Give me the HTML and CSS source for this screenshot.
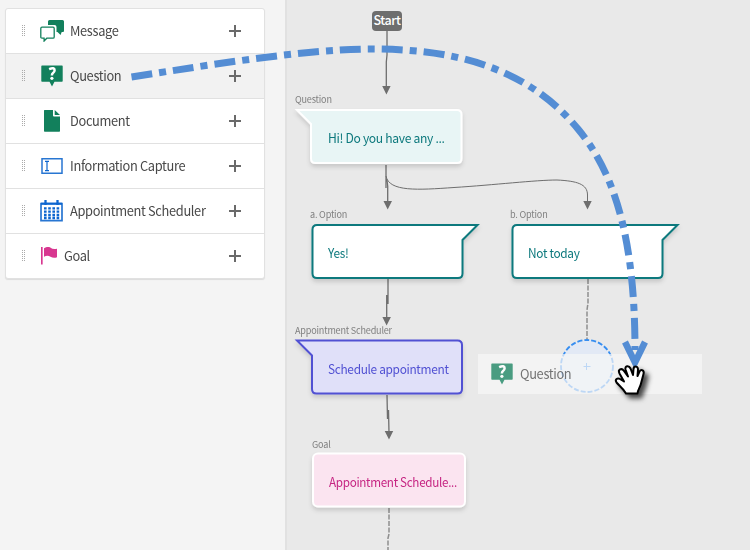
FILE: index.html
```html
<!DOCTYPE html>
<html lang="en">
<head>
<meta charset="utf-8">
<title>Flow designer</title>
<link rel="stylesheet" href="styles.css">
</head>
<body>
<svg class="defs" width="0" height="0" aria-hidden="true">
  <symbol id="grip" viewBox="0 0 5 11">
    <path d="M.5 0V11M2.500 0V11" stroke="#aaa" stroke-width="1" stroke-dasharray="1 1"/>
  </symbol>
  <symbol id="plus" viewBox="0 0 12 12"><path d="M0 6H12M6 0V12" stroke="#6a6a6a" stroke-width="2"/></symbol>
  <symbol id="message" viewBox="0 0 24 22">
    <path d="M9.500 0H22.500Q24 0 24 1.500V11Q24 12 23 12H21.700L20.600 15L17.500 12H16.500V7Q16.500 5 14.500 5H8V1.500Q8 0 9.500 0Z" fill="#12805c"/>
    <path d="M2 7.200H13Q14.200 7.200 14.200 8.400V17Q14.200 18.200 13 18.200H6.800L4.100 21V18.200H2Q.8 18.200 .8 17V8.400Q.8 7.200 2 7.200Z" fill="#fff" stroke="#12805c" stroke-width="1.300"/>
  </symbol>
  <symbol id="question" viewBox="0 0 22 22">
    <path d="M1 .5H21Q21.700 .5 21.700 1.200V16Q21.700 16.700 21 16.700H13.500L11 21.500L8.500 16.700H1Q.3 16.700 .3 16V1.200Q.3 .5 1 .5Z" fill="#12805c"/>
    <path d="M8.100 4.200Q13.600 1.900 13.600 5.300Q13.600 6.900 12 8Q10.900 8.800 10.900 10.400" fill="none" stroke="#fff" stroke-width="2.500"/>
    <circle cx="10.900" cy="13.300" r="1.600" fill="#fff"/>
  </symbol>
</svg>
<div class="app">
  <aside class="palette">
    <ul class="cards">
      <li class="card"><svg class="grip"><use href="#grip"/></svg><svg class="icon message"><use href="#message"/></svg><span>Message</span><svg class="add"><use href="#plus"/></svg></li>
      <li class="card active"><svg class="grip"><use href="#grip"/></svg><svg class="icon"><use href="#question"/></svg><span>Question</span><svg class="add"><use href="#plus"/></svg></li>
      <li class="card"><svg class="grip"><use href="#grip"/></svg><svg class="icon" viewBox="0 0 22 22"><path d="M3.500 0H12V5.500Q12 6.500 13 6.500H19V21Q19 21.700 18.300 21.700H3.700Q3 21.700 3 21V.7Q3 0 3.500 0ZM13.700 0L19 5H13.700Z" fill="#12805c"/></svg><span>Document</span><svg class="add"><use href="#plus"/></svg></li>
      <li class="card"><svg class="grip"><use href="#grip"/></svg><svg class="icon" viewBox="0 0 22 22"><path d="M1 3.700H21V18.300H1Z" fill="#fff" stroke="#2876d2" stroke-width="1.500"/><path d="M4 6.300H8M4 15.700H8M6 6.300V15.700" stroke="#0d66d0" stroke-width="1.200"/></svg><span>Information Capture</span><svg class="add"><use href="#plus"/></svg></li>
      <li class="card"><svg class="grip"><use href="#grip"/></svg><svg class="icon calendar" viewBox="0 0 23 22"><path d="M1 3.700H22V20.700H1Z" fill="#fff" stroke="#2876d2" stroke-width="1.700"/><path d="M1 3.700H22" stroke="#0d66d0" stroke-width="2"/><path d="M5.500 0V5M17.500 0V5" stroke="#0d66d0" stroke-width="2.300"/><path d="M4 8.300H19.500M4 11.700H19.500M4 15H19.500M4 18H19.500" stroke="#0d66d0" stroke-width="2.300" stroke-dasharray="2.600 1.600"/></svg><span>Appointment Scheduler</span><svg class="add"><use href="#plus"/></svg></li>
      <li class="card"><svg class="grip"><use href="#grip"/></svg><svg class="icon goal" viewBox="0 0 16 18"><path d="M.8 0V17.500" stroke="#d83790" stroke-width="1.700"/><path d="M3 1.200Q7-1.300 10 1Q11.500 2.300 16 1.700V10.200Q12.500 11.700 9.500 9.700Q6.500 7.700 3 9.700Z" fill="#d83790"/></svg><span>Goal</span><svg class="add"><use href="#plus"/></svg></li>
    </ul>
  </aside>
  <main class="canvas"></main>
  <div class="stage">
    <svg class="layer" viewBox="0 0 750 550">
      <defs>
        <filter id="shade" x="-10%" y="-10%" width="120%" height="140%"><feDropShadow dx="0" dy="3" stdDeviation="2" flood-opacity=".14"/></filter>
      </defs>
      <g class="wire">
        <path d="M387 31V55L386.300 62V88"/>
        <path d="M386 165V188M386 178Q387.700 181 387.700 186V203"/>
        <path class="branch" d="M386 176C389 192 418 190 454 187.500C494 185 536 180 557 180C577 181 587.500 184 587.500 195V203"/>
        <path d="M388 279V304M386.700 295V318"/>
        <path d="M387 395L387.500 419M388.500 410L389 433"/>
      </g>
      <path class="tip" d="M382.200 86H390.600L386.400 94.500ZM383.500 201H392L387.700 209.500ZM583.300 201H591.700L587.500 209.500ZM382.400 317H390.900L386.600 325.500ZM384.700 431H393.200L389 439.500Z"/>
      <path class="dotted" d="M588 279V303L587 310V341M389 508V534L388 538V550"/>
      <g filter="url(#shade)" stroke-width="2">
        <path d="M297 110H457Q461.500 110 461.500 114.500V158.500Q461.500 163 457 163H315.500Q311 163 311 158.500V124Z" fill="#e8f5f5" stroke="#fff"/>
        <path d="M317 225H477.500L462.500 240V273.500Q462.500 278 458 278H317Q312.500 278 312.500 273.500V229.500Q312.500 225 317 225Z" fill="#fff" stroke="#0d797d"/>
        <path d="M517 225H677.500L662.500 240V273.500Q662.500 278 658 278H517Q512.500 278 512.500 273.500V229.500Q512.500 225 517 225Z" fill="#fff" stroke="#0d797d"/>
        <path d="M297 340.500H457.500Q462 340.500 462 345V389Q462 393.500 457.500 393.500H316.500Q312 393.500 312 389V355.500Z" fill="#e0e0f9" stroke="#5151d3"/>
        <rect x="313" y="453.500" width="152" height="53" rx="5" fill="#fbe4f0" stroke="#fff"/>
      </g>
      <circle cx="587" cy="366" r="26" fill="#e2e9f5" stroke="#378ef0" stroke-width="1.800" stroke-dasharray="5 2"/>
      <path d="M583.500 366.500H590.500M586.500 363V370" stroke="#378ef0"/>
    </svg>
    <span class="start">Start</span>
    <span class="tag q-tag">Question</span>
    <span class="tag a-tag">a. Option</span>
    <span class="tag b-tag">b. Option</span>
    <span class="tag s-tag">Appointment Scheduler</span>
    <span class="tag g-tag">Goal</span>
    <span class="text q-text">Hi! Do you have any ...</span>
    <span class="text a-text">Yes!</span>
    <span class="text b-text">Not today</span>
    <span class="text s-text">Schedule appointment</span>
    <span class="text g-text">Appointment Schedule...</span>
    <div class="ghost"></div>
    <div class="ghost-content"><svg class="icon"><use href="#question"/></svg><span>Question</span></div>
    <svg class="layer" viewBox="0 0 750 550">
      <defs><filter id="handshade" x="-30%" y="-30%" width="180%" height="180%"><feDropShadow dx="4" dy="4" stdDeviation="2.500" flood-opacity=".7"/></filter></defs>
      <path d="M131.500 77C185 69 300 49 372 49C450 49 525 65 578 129C612 170 635 232 635 350" fill="none" stroke="#548dd4" stroke-width="7" stroke-dasharray="21 7 7 7"/>
      <path d="M625 342L635 362.500L645 342" fill="none" stroke="#548dd4" stroke-width="6.500"/>
      <path filter="url(#handshade)" d="M626 393.500C623 388 619.500 386 616.500 382.500C614.500 379.500 617.500 377.500 620 379L624 381.500L619.500 373.500C617.500 369.500 621.500 367.500 624 371L628 376.500L625.500 369.500C624.500 365.500 629 365 630.500 368.500L633 375L633.500 369C634 365.500 638 366 638 369.500L637.500 376L639.500 371.500C641.500 368.500 644.500 370.500 643.500 374L641 383.500C640 388 638 389 637.500 393.500Z" fill="#fff" stroke="#000" stroke-width="2" stroke-linejoin="round"/>
    </svg>
  </div>
</div>
</body>
</html>
```
FILE: styles.css
```css
body { margin: 0; font-family: "Noto Sans CJK SC", "Noto Sans", sans-serif; color: #484848; }
.defs { position: absolute; }
.app { position: relative; display: flex; width: 750px; height: 550px; overflow: hidden; }
.palette { box-sizing: border-box; width: 287px; padding: 8px 20px 0 5px; background: #f4f4f4; border-right: 2px solid #e1e1e1; }
.canvas { flex: 1; background: #e9e9e9; }
.cards { margin: 0; padding: 0; list-style: none; width: 258px; background: #fff; border: 1px solid #e1e1e1; border-radius: 3px; box-shadow: 0 1px 1px #dcdcdc; }
.card { display: flex; align-items: center; box-sizing: border-box; height: 45px; padding: 0 23px 0 16px; border-bottom: 1px solid #e1e1e1; font-size: 13.5px; line-height: 20px; white-space: nowrap; }
.card span, .ghost-content span { letter-spacing: -.36px; transform: scaleX(.95); transform-origin: left; margin-bottom: 2px; }
.card:last-child { border-bottom: 0; height: 44px; }
.active { background: #f2f2f2; }
.grip { width: 5px; height: 11px; margin-right: 14px; margin-bottom: 2px; }
.icon { width: 22px; height: 22px; flex: none; margin-right: 7px; }
.message { width: 24px; margin-left: -1px; margin-right: 6px; }
.calendar { width: 23px; margin-left: -1px; }
.goal { width: 16px; height: 18px; }
.add { width: 12px; height: 12px; margin-left: auto; }
.stage, .layer { position: absolute; inset: 0; width: 750px; height: 550px; }
.wire { fill: none; stroke: #6e6e6e; stroke-width: 1.3; }
.branch { stroke-width: 1; }
.tip { fill: #6e6e6e; }
.dotted { fill: none; stroke: #8e8e8e; stroke-width: 1.5; stroke-dasharray: 5 1.5; }
.start { position: absolute; left: 372px; top: 11px; width: 30px; height: 20px; border-radius: 4px; background: #6e6e6e; color: #fff; font-size: 12.5px; font-weight: 500; line-height: 18px; letter-spacing: -.4px; text-align: center; }
.tag { position: absolute; font-size: 9.5px; line-height: 14px; color: #808080; white-space: nowrap; letter-spacing: -.2px; transform: scaleX(.955); transform-origin: left; }
.q-tag { left: 295px; top: 92px; }
.a-tag { left: 310px; top: 207px; }
.b-tag { left: 510px; top: 207px; }
.s-tag { left: 295px; top: 323px; }
.g-tag { left: 312px; top: 437px; }
.text { position: absolute; font-size: 12.5px; line-height: 18px; white-space: nowrap; color: #0d797d; letter-spacing: -.34px; transform: scaleX(.95); transform-origin: left; }
.q-text { left: 328px; top: 129px; transform: scaleX(.97); }
.a-text { left: 328px; top: 244px; }
.b-text { left: 528px; top: 244px; }
.s-text { left: 328px; top: 360px; color: #5151d3; }
.g-text { left: 329px; top: 473px; color: #c62683; transform: scaleX(.935); }
.ghost { position: absolute; left: 478px; top: 354px; width: 224px; height: 40px; background: rgba(247, 247, 247, .7); }
.ghost-content { position: absolute; left: 491px; top: 363px; display: flex; align-items: center; font-size: 13.5px; line-height: 20px; opacity: .75; }
```
